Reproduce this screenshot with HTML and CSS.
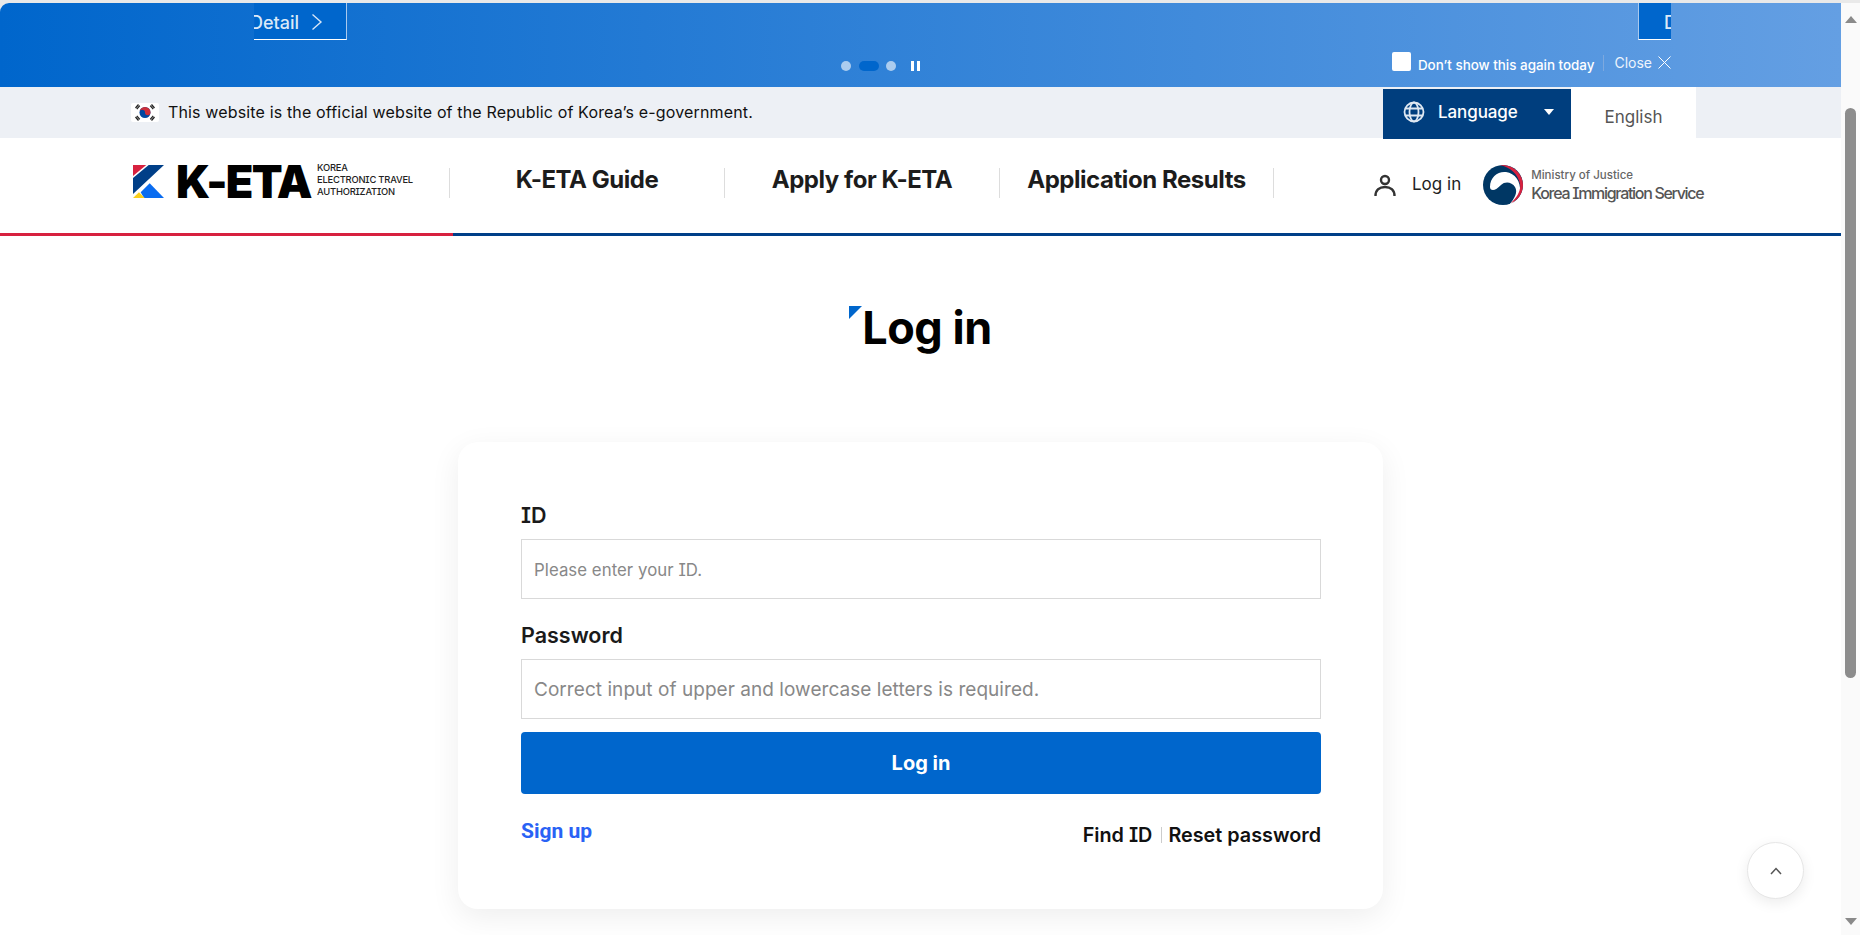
FILE: index.html
```html
<!DOCTYPE html>
<html lang="en">
<head>
<meta charset="utf-8">
<title>K-ETA Log in</title>
<link rel="stylesheet" href="styles.css">
</head>
<body>
<div class="window">
  <div class="page">
    <section class="banner">
      <div class="slides">
        <a class="slide-btn slide-btn-left">Detail <svg class="chev" viewBox="0 0 12 18"><path d="M1.5 1.5 10 9l-8.500 7.500" fill="none" stroke="#d5e5f7" stroke-width="1.400"/></svg></a>
        <a class="slide-btn slide-btn-right">Detail</a>
      </div>
      <div class="banner-ctrl">
        <div class="pager">
          <span class="dot"></span><span class="dot dot-on"></span><span class="dot"></span>
          <span class="pause"><i></i><i></i></span>
        </div>
        <div class="today">
          <span class="check"></span>
          <span class="today-txt">Don’t show this again today</span>
          <span class="today-sep"></span>
          <span class="close-txt">Close</span>
          <svg class="x" viewBox="0 0 13 13"><path d="M.5.5l12 12M12.500.5l-12 12" stroke="#fff" stroke-width="1" fill="none"/></svg>
        </div>
      </div>
    </section>

    <div class="gov">
      <svg class="flag" viewBox="0 0 28 19">
        <rect width="28" height="19" rx="2" fill="#fff"/>
        <circle cx="14" cy="9.500" r="5.500" fill="#0047a0"/>
        <path d="M8.500 9.500a5.500 5.500 0 0 1 11 0 2.750 2.750 0 0 1-5.500 0 2.750 2.750 0 0 0-5.500 0z" fill="#cd2e3a"/>
        <g stroke="#222" stroke-width="1.300"><path d="M4.500 5l3-3.500M5.800 6.200l3-3.500M19.200 2.700l3 3.500M20.500 1.500l3 3.500M4.500 14l3 3.500M5.800 12.800l3 3.500M19.200 16.300l3-3.500M20.500 17.500l3-3.500"/></g>
      </svg>
      <span class="gov-txt">This website is the official website of the Republic of Korea’s e-government.</span>
      <div class="lang">
        <svg class="globe" viewBox="0 0 22 22" fill="none" stroke="#dfe8f2" stroke-width="1.800"><circle cx="11" cy="11" r="9.500"/><ellipse cx="11" cy="11" rx="4.500" ry="9.500"/><path d="M2 7.500h18M2 14.500h18"/></svg>
        <span class="lang-txt">Language</span>
        <span class="caret"></span>
      </div>
      <div class="lang-cur">English</div>
    </div>

    <header class="head">
      <div class="logo">
        <svg class="logo-k" viewBox="0 0 31 33">
          <path d="M0 0h13.300L0 11z" fill="#d7213f"/>
          <path d="M15.700 0H31L0 29V13z" fill="#003f88"/>
          <path d="M16.700 18.300 31 33H11l-3.300-5.700z" fill="#0a6cf0"/>
          <path d="M0 33l6-5.700L11.700 33z" fill="#f9cf1c"/>
        </svg>
        <span class="logo-name">K-ETA</span>
        <span class="logo-sub">KOREA<br>ELECTRONIC TRAVEL<br>AUTHORIZATION</span>
      </div>
      <nav class="nav">
        <a class="nav-item">K-ETA Guide</a>
        <a class="nav-item">Apply for K-ETA</a>
        <a class="nav-item">Application Results</a>
      </nav>
      <a class="login">
        <svg class="user" viewBox="0 0 22 23" fill="none" stroke="#333" stroke-width="2.400"><circle cx="11" cy="6" r="4"/><path d="M1.500 22c0-6 4-9 9.500-9s9.500 3 9.500 9"/></svg>
        <span>Log in</span>
      </a>
      <div class="moj">
        <svg class="emblem" viewBox="0 0 40 40">
          <circle cx="20" cy="20" r="20" fill="#003764"/>
          <path d="M7 22C7 12 15 6 23 7c9 1 15 10 14 19-1 6-5 11-11 14 6-7 9-13 6-18-3-5-10-6-14-2-3 3-6 5-8 5s-3-1-3-3z" fill="#fff"/>
          <path d="M17 0c13-1 23 9 23 20 0 9-6 16-12 18 6-6 10-12 9-19C35 9 27 2 17 0z" fill="#d7213f"/>
        </svg>
        <div class="moj-txt">
          <span class="moj-a">Ministry of Justice</span>
          <span class="moj-b">Korea Immigration Service</span>
        </div>
      </div>
    </header>
    <div class="rule"></div>

    <main class="main">
      <h1 class="title">Log in</h1>
      <form class="card">
        <label class="lbl">ID</label>
        <div class="field field-sm">Please enter your ID.</div>
        <label class="lbl lbl-2">Password</label>
        <div class="field">Correct input of upper and lowercase letters is required.</div>
        <button class="submit" type="button">Log in</button>
        <div class="links">
          <a class="signup">Sign up</a>
          <div class="finds"><a>Find ID</a><span class="finds-sep"></span><a>Reset password</a></div>
        </div>
      </form>
      <a class="to-top"><svg viewBox="0 0 12 8" class="to-top-i"><path d="M1 7l5-5.500L11 7" fill="none" stroke="#555" stroke-width="1.500"/></svg></a>
    </main>
  </div>
  <aside class="sbar">
    <span class="sbar-up"></span>
    <span class="sbar-thumb"></span>
    <span class="sbar-down"></span>
  </aside>
</div>
</body>
</html>
```
FILE: styles.css
```css
* { box-sizing: border-box; }
html, body { margin: 0; height: 935px; overflow: hidden; background: #fff; }
body { font-family: Inter, "Noto Sans", sans-serif; color: #111; font-feature-settings: "cv08"; }
a { color: inherit; text-decoration: none; }

.window { display: flex; height: 935px; padding-top: 3px; background: #e9e9e9; }
.page { flex: 1; min-width: 0; background: #fff; border-top-left-radius: 9px; overflow: hidden; position: relative; }
.sbar { width: 19px; display: flex; flex-direction: column; align-items: center; background: #fafafa; }

.sbar-up { margin-top: 13px; width: 0; height: 0; border: 6px solid transparent; border-top: 0; border-bottom: 7px solid #8a8a8a; }
.sbar-thumb { margin-top: 85px; width: 11px; height: 570px; background: #8c8c8c; border-radius: 6px; }
.sbar-down { margin-top: 240px; width: 0; height: 0; border: 6px solid transparent; border-bottom: 0; border-top: 7px solid #8a8a8a; }

.banner { height: 84px; background: linear-gradient(90deg, #0066cc, #649fe3); display: flex; flex-direction: column; padding-left: 254px; padding-right: 170px; }
.slides { height: 37px; display: flex; justify-content: space-between; overflow: hidden; }
.slide-btn { height: 37px; background: #0066cc; color: #dbe9f8; font-size: 18px; font-weight: 500; display: flex; align-items: center; white-space: nowrap; padding-top: 2px; }
.slide-btn-left { width: 93px; border-right: 1px solid #a9c9ee; border-bottom: 1px solid #fff; text-indent: -4px; gap: 12px; }
.chev { width: 12px; height: 18px; }
.slide-btn-right { width: 33px; border-left: 1px solid #a9c9ee; border-bottom: 1px solid #fff; padding-left: 25px; overflow: hidden; }

.banner-ctrl { display: flex; height: 47px; }
.pager { margin-left: 587px; margin-top: 21px; display: flex; gap: 8px; height: 10px; }
.dot { width: 10px; height: 10px; border-radius: 50%; background: rgba(255,255,255,.6); }
.dot-on { width: 20px; border-radius: 5px; background: #0066cc; margin-right: -1px; }
.pause { margin-left: 7px; display: flex; gap: 3px; }
.pause i { display: block; width: 3px; height: 10px; background: #fff; }

.today { margin-left: auto; display: flex; align-items: flex-start; color: #fff; font-size: 13.400px; font-weight: 500; }
.check { width: 19px; height: 19px; margin-top: 12px; background: #fff; border-radius: 2px; }
.today-txt { margin-left: 7px; margin-top: 16px; line-height: 18px; white-space: nowrap; }
.today-sep { width: 1px; height: 16px; margin: 15px 10px 0 9px; background: #7da9df; }
.close-txt { margin-top: 14px; line-height: 18px; font-size: 14px; font-weight: 400; color: #eef4fc; }
.x { width: 13px; height: 13px; margin: 16px 0 0 6px; }

.gov { height: 51px; background: #edf0f5; display: flex; padding-left: 131px; padding-right: 145px; align-items: center; }
.flag { width: 28px; height: 19px; }
.gov-txt { margin-left: 9px; margin-bottom: 2px; font-size: 16px; letter-spacing: .15px; color: #111; }
.lang { margin-left: auto; width: 188px; height: 50px; margin-top: 2px; margin-bottom: -1px; align-self: flex-start; background: #003e7e; color: #fff; display: flex; align-items: center; padding: 0 0 5px 20px; font-weight: 500; position: relative; z-index: 1; }
.globe { width: 22px; height: 22px; }
.lang-txt { margin-left: 13px; font-size: 17px; letter-spacing: -.1px; }
.caret { margin-left: 26px; width: 0; height: 0; border: 5.500px solid transparent; border-top: 6px solid #fff; border-bottom: 0; }
.lang-cur { width: 125px; height: 51px; background: #fff; color: #555; font-size: 17px; text-align: center; padding-top: 19px; line-height: 22px; }

.head { height: 95px; display: flex; align-items: flex-start; padding-left: 133px; }
.logo { width: 316px; margin-top: 26px; display: flex; align-items: center; }
.logo-k { width: 31px; height: 33px; flex: none; }
.logo-name { margin-left: 12px; font-size: 45px; line-height: 33px; font-weight: 900; color: #000; letter-spacing: -1.700px; width: 135px; flex: none; white-space: nowrap; }
.logo-sub { margin-left: 6px; margin-top: -2px; font-size: 9.400px; line-height: 12px; font-weight: 500; color: #222; letter-spacing: -.2px; white-space: nowrap; }
.nav { display: flex; margin-top: 30px; }
.nav-item { width: 275px; height: 30px; border-left: 1px solid #ddd; text-align: center; font-size: 24px; font-weight: 700; line-height: 24px; color: #1c1c1c; white-space: nowrap; letter-spacing: -.45px; }
.nav-item:last-child { border-right: 1px solid #ddd; }
.login { margin-left: 100px; margin-top: 32px; display: flex; align-items: center; gap: 16px; font-size: 17px; color: #222; }
.user { width: 22px; height: 23px; margin-top: 4px; }
.moj { margin-left: 22px; margin-top: 27px; display: flex; align-items: center; }
.emblem { width: 40px; height: 40px; flex: none; }
.moj-txt { margin-left: 8px; display: flex; flex-direction: column; color: #555; white-space: nowrap; }
.moj-a { font-size: 11.500px; line-height: 16px; font-weight: 500; color: #666; }
.moj-b { font-size: 16px; line-height: 20px; font-weight: 500; letter-spacing: -1.300px; color: #555; }

.rule { height: 3px; background: linear-gradient(90deg, #d7213f 453px, #003f88 453px); }

.main { height: 698px; display: flex; flex-direction: column; align-items: center; position: relative; padding-top: 65px; }
.title { position: relative; margin: 0; padding-left: 13px; font-size: 45px; line-height: 54px; font-weight: 700; letter-spacing: -.5px; color: #000; }
.title::before { content: ""; position: absolute; left: 0; top: 5px; width: 0; height: 0; border-top: 13px solid #0066cc; border-right: 13px solid transparent; }
.card { width: 925px; height: 467px; margin-top: 87px; background: #fff; border-radius: 20px; box-shadow: 0 8px 30px rgba(0,0,0,.07); padding: 60px 62px 0 63px; display: flex; flex-direction: column; }
.lbl { font-size: 21.500px; line-height: 26px; font-weight: 600; color: #1a1a1a; }
.lbl-2 { margin-top: 23px; }
.field { margin-top: 11px; height: 60px; border: 1px solid #d9d9d9; padding-left: 12px; display: flex; align-items: center; font-size: 19px; letter-spacing: .05px; color: #888; }
.field-sm { font-size: 16.800px; padding-top: 1px; }
.submit { margin-top: 13px; height: 62px; border: 0; border-radius: 4px; background: #0066cc; color: #fff; font: 700 20px Inter, sans-serif; font-feature-settings: "cv08"; }
.links { display: flex; justify-content: space-between; margin-top: 25px; }
.signup { color: #2962f5; font-size: 21px; font-weight: 700; line-height: 24px; font-family: Roboto, sans-serif; }
.finds { display: flex; align-items: center; margin-top: 4px; font-size: 19.800px; font-weight: 600; color: #111; height: 24px; }
.finds-sep { width: 1px; height: 16px; margin: 0 6px 0 9px; background: #ccc; }
.to-top { position: absolute; left: 1747px; top: 606px; width: 57px; height: 57px; border-radius: 50%; background: #fff; border: 1px solid #e6e6e6; box-shadow: 0 4px 14px rgba(0,0,0,.08); display: flex; align-items: center; justify-content: center; }
.to-top-i { width: 12px; height: 8px; }
```
